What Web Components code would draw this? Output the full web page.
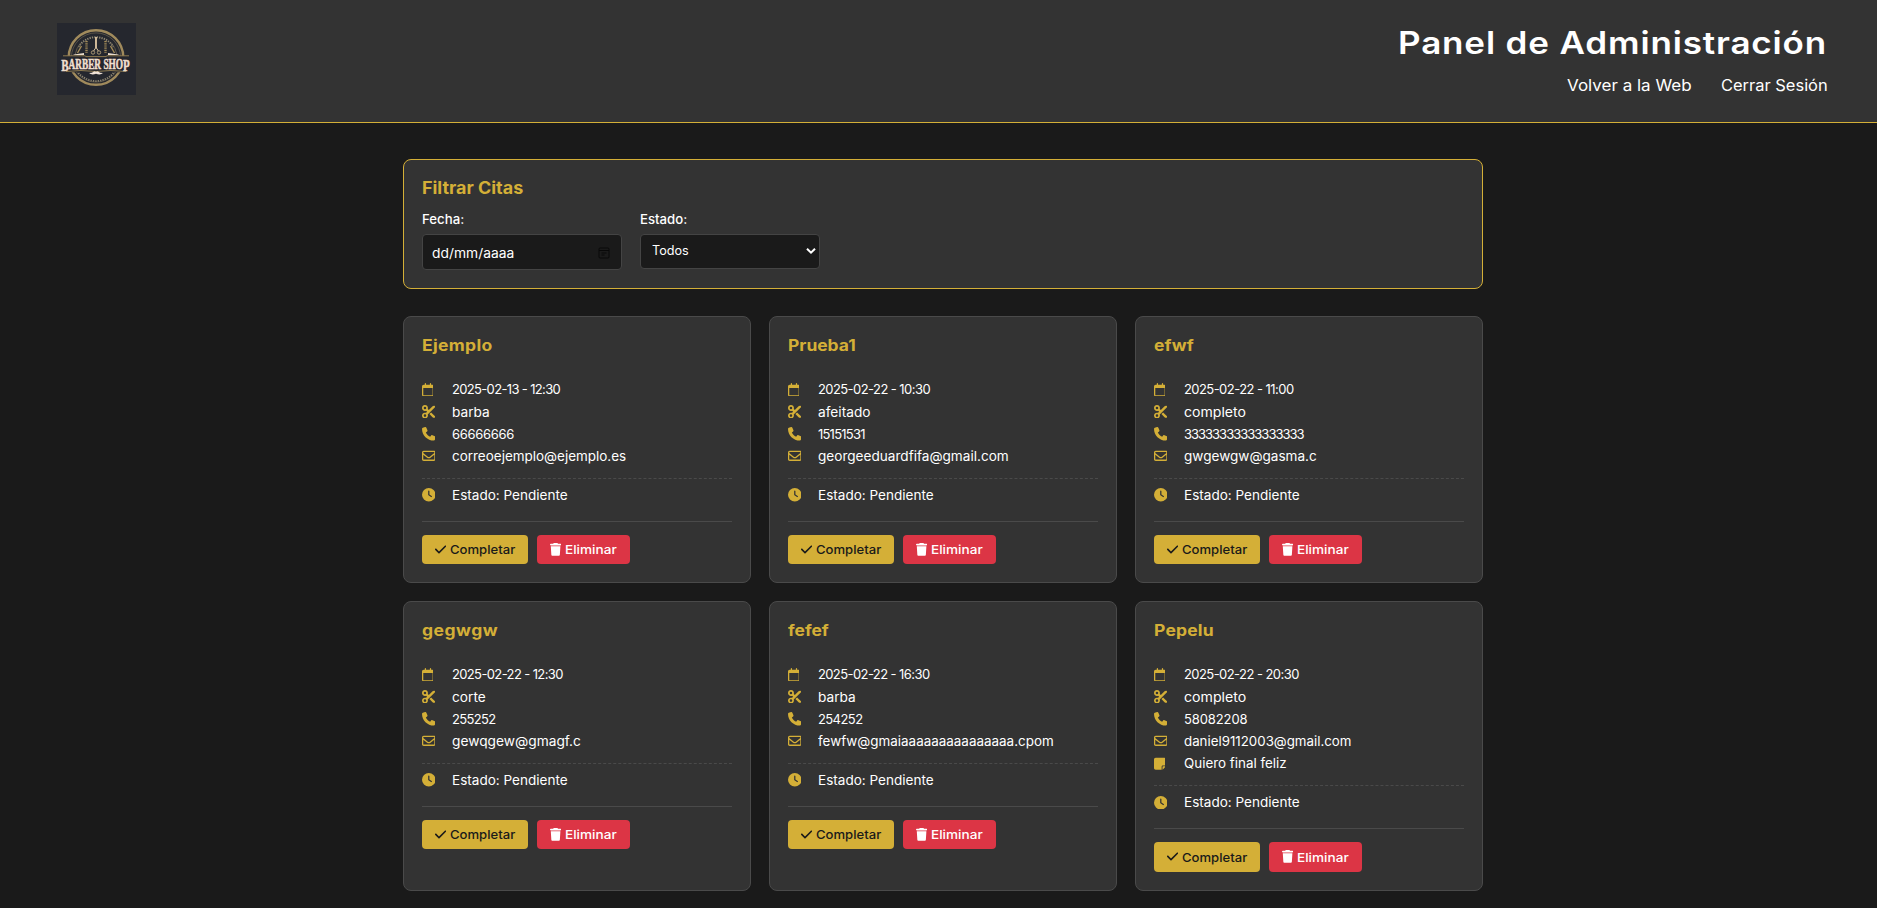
<!DOCTYPE html>
<html lang="es">
<head>
<meta charset="utf-8">
<title>Panel de Administración</title>
<style>
html,body{margin:0;height:100%;overflow:hidden}
body{background:#1a1a1a;color:#fff;font-family:Inter,"Open Sans",sans-serif;font-size:13px}
</style>
</head>
<body>
<admin-page></admin-page>
<script>
const ICONS = {
  calendar:[448,"M152 24c0-13.3-10.7-24-24-24s-24 10.7-24 24V64H64C28.7 64 0 92.7 0 128v16 48V448c0 35.3 28.7 64 64 64H384c35.3 0 64-28.7 64-64V192 144 128c0-35.3-28.7-64-64-64H344V24c0-13.3-10.7-24-24-24s-24 10.7-24 24V64H152V24zM48 192H400V448c0 8.8-7.2 16-16 16H64c-8.8 0-16-7.2-16-16V192z"],
  scissors:[512,"M256 192l-39.5-39.5c4.9-12.6 7.5-26.2 7.5-40.5C224 50.1 173.9 0 112 0S0 50.1 0 112s50.1 112 112 112c14.3 0 27.9-2.7 40.5-7.5L192 256l-39.5 39.5c-12.6-4.9-26.2-7.5-40.5-7.5C50.1 288 0 338.1 0 400s50.1 112 112 112s112-50.1 112-112c0-14.3-2.7-27.9-7.5-40.5L499.2 76.8c7.1-7.1 7.1-18.5 0-25.6c-28.3-28.3-74.1-28.3-102.4 0L256 192zm22.6 150.6L396.8 460.8c28.3 28.3 74.1 28.3 102.4 0c7.1-7.1 7.1-18.5 0-25.6L342.6 278.6l-64 64zM64 112a48 48 0 1 1 96 0 48 48 0 1 1 -96 0zm48 240a48 48 0 1 1 0 96 48 48 0 1 1 0-96z"],
  phone:[512,"M164.9 24.6c-7.7-18.6-28-28.5-47.4-23.2l-88 24C12.1 30.2 0 46 0 64C0 311.4 200.6 512 448 512c18 0 33.8-12.1 38.6-29.5l24-88c5.3-19.4-4.6-39.7-23.2-47.4l-96-40c-16.3-6.8-35.2-2.1-46.3 11.6L304.7 368C234.3 334.7 177.3 277.7 144 207.3L193.3 167c13.7-11.2 18.4-30 11.6-46.3l-40-96z"],
  envelope:[512,"M64 112c-8.8 0-16 7.2-16 16v22.1L220.5 291.7c20.7 17 50.4 17 71.1 0L464 150.1V128c0-8.8-7.2-16-16-16H64zM48 212.2V384c0 8.8 7.2 16 16 16H448c8.8 0 16-7.2 16-16V212.2L322 328.8c-38.4 31.5-93.7 31.5-132 0L48 212.2zM0 128C0 92.7 28.7 64 64 64H448c35.3 0 64 28.7 64 64V384c0 35.3-28.7 64-64 64H64c-35.3 0-64-28.7-64-64V128z"],
  clock:[512,"M256 0a256 256 0 1 1 0 512A256 256 0 1 1 256 0zM232 120V256c0 8 4 15.5 10.7 20l96 64c11 7.4 25.9 4.4 33.3-6.7s4.4-25.9-6.7-33.3L280 243.2V120c0-13.3-10.7-24-24-24s-24 10.7-24 24z"],
  note:[448,"M64 32C28.7 32 0 60.7 0 96V416c0 35.3 28.7 64 64 64H288V368c0-26.5 21.5-48 48-48H448V96c0-35.3-28.7-64-64-64H64zM448 352H402.7 336c-8.8 0-16 7.2-16 16v66.7V480l32-32 64-64 32-32z"],
  check:[448,"M438.6 105.4c12.5 12.5 12.5 32.8 0 45.3l-256 256c-12.5 12.5-32.8 12.5-45.3 0l-128-128c-12.5-12.5-12.5-32.8 0-45.3s32.8-12.5 45.3 0L160 338.7 393.4 105.4c12.5-12.5 32.8-12.5 45.3 0z"],
  trash:[448,"M135.2 17.7L128 32H32C14.3 32 0 46.3 0 64S14.3 96 32 96H416c17.7 0 32-14.3 32-32s-14.3-32-32-32H320l-7.2-14.3C307.4 6.8 296.3 0 284.2 0H163.8c-12.1 0-23.2 6.8-28.6 17.7zM416 128H32L53.2 467c1.6 25.3 22.6 45 47.9 45H346.9c25.3 0 46.3-19.7 47.9-45L416 128z"]
};

class BaseElement extends HTMLElement {
  connectedCallback(){
    if(this.shadowRoot) return;
    this.attachShadow({mode:"open"}).innerHTML = this.render();
    this.ready();
  }
  ready(){}
}

/* A line of text that is widened (glyphs first, then tracking) to fill the given width. */
customElements.define("fit-text", class extends BaseElement {
  render(){ return `<style>:host{display:inline-block;white-space:nowrap}span{display:inline-block;transform-origin:0 50%;margin-left:-.5px}</style><span><slot></slot></span>`; }
  ready(){
    const span = this.shadowRoot.querySelector("span");
    const target = parseFloat(this.getAttribute("w"));
    const n = this.textContent.length;
    const side = 1.2;
    const natural = span.getBoundingClientRect().width;
    const scale = Math.min(1.13, Math.max(1, (target + side) / natural));
    this.style.width = target + "px";
    span.style.letterSpacing = (((target + side) / scale - natural) / (n - 1)) + "px";
    if(scale > 1.005) span.style.transform = `scaleX(${scale})`;
  }
});

customElements.define("fa-icon", class extends BaseElement {
  render(){
    const [w,d] = ICONS[this.getAttribute("name")];
    const s = parseFloat(this.getAttribute("size") || 13.6);
    return `<style>:host{display:inline-flex;flex:none}svg{display:block;fill:currentColor}</style>
    <svg width="${s*w/512}" height="${s}" viewBox="0 0 ${w} 512"><path d="${d}"/></svg>`;
  }
});

customElements.define("shop-logo", class extends BaseElement {
  render(){ return `<style>:host{display:block;width:79px;height:72px}svg{display:block}</style>
  <svg width="79" height="72" viewBox="0 0 79 72">
    <rect width="79" height="72" fill="#25272e"/>
    <g fill="none">
      <circle cx="39" cy="34.500" r="27.300" stroke="#a08a5c" stroke-width="2.400"/>
      <circle cx="39" cy="34.500" r="24.600" stroke="#6c6352" stroke-width=".7"/>
      <path d="M21.500 24a20.500 20.500 0 0 1 35 0" stroke="#8d8571" stroke-width="2" stroke-dasharray="1.300 1.100"/>
      <path d="M20 48a23 23 0 0 0 38 0" stroke="#8d8571" stroke-width="1.800" stroke-dasharray="1.300 1.100"/>
      <path d="M18 32a22 22 0 0 1 6-12M60 32a22 22 0 0 0-6-12" stroke="#6f6653" stroke-width=".8"/>
      <path d="M38.600 14v11l-2 3M39.400 14v11l2 3" stroke="#e0c8a4" stroke-width="1"/>
      <circle cx="36" cy="29.500" r="1.700" stroke="#b5a07a" stroke-width=".9"/>
      <circle cx="42" cy="29.500" r="1.700" stroke="#b5a07a" stroke-width=".9"/>
      <path d="M29.500 18v12M48.500 18v12" stroke="#a38b58" stroke-width="2.400" stroke-dasharray="1 .8"/>
      <path d="M24.500 23l-4 7M53.500 23l4 7" stroke="#a38b58" stroke-width="1.400"/>
    </g>
    <path d="M17 31.500l10-1.500v2H16zM61 31.500l-10-1.500v2h11z" fill="#eadccb"/>
    <path d="M7 32.800h64l-2 4v8l3 4.500H6l3-4.500v-8z" fill="#25272e"/>
    <path d="M6 32.800h22l1 .8h20l1-.8h22M9 48.500q15-2 30 0q15-2 30 0" fill="none" stroke="#9a8353" stroke-width=".9"/>
    <text transform="translate(4.200 46.300) scale(.665 1)" fill="#f0dfcf" stroke="#f0dfcf" stroke-width=".5" font-family="Liberation Serif, serif" font-weight="700" font-size="14"><tspan font-size="16.500" dy="1.800">B</tspan><tspan dy="-1.800">ARBER SHO</tspan><tspan font-size="16.500" dy="1.800">P</tspan></text>
    <path d="M32 50q3.500 0 4.800-1.500q1.400-.8 2.200.4q.8-1.200 2.200-.4q1.300 1.500 4.800 1.500q-2.500 2.500-7 .8q-4.500 1.700-7-.8z" fill="#f0e3d8"/>
  </svg>`; }
});

customElements.define("admin-header", class extends BaseElement {
  render(){ return `<style>
    :host{display:flex;box-sizing:border-box;height:123px;padding:23px 50px 0 57px;justify-content:space-between;align-items:flex-start;background:#333;border-bottom:1px solid #d4af37}
    .right{display:flex;flex-direction:column;align-items:flex-end;gap:13px}
    h1{margin:0;font-size:31px;line-height:39px;font-weight:600;margin-right:1.500px}
    nav{display:flex;gap:31px;font-size:15.5px;line-height:22px}
    a{color:#fff;text-decoration:none}
    </style>
    <shop-logo></shop-logo>
    <div class="right"><h1><fit-text w="427">Panel de Administración</fit-text></h1>
    <nav><a><fit-text w="123.5">Volver a la Web</fit-text></a><a><fit-text w="105.5">Cerrar Sesión</fit-text></a></nav></div>`; }
});

customElements.define("filter-panel", class extends BaseElement {
  render(){ return `<style>
    :host{display:block;box-sizing:border-box;height:130px;padding:17px 18px;background:#333;border:1px solid #d4af37;border-radius:8px}
    h2{margin:0 0 12px;font-size:17px;line-height:22px;font-weight:700;color:#d4af37}
    .row{display:flex;gap:18px;align-items:flex-start}
    label{display:block;font-size:13px;line-height:16px;font-weight:500;margin-bottom:7px}
    .box{box-sizing:border-box;display:flex;align-items:center;justify-content:space-between;background:#1a1a1a;border:1px solid #444;border-radius:4px;line-height:16px}
    .date{width:200px;height:36px;padding:1px 11px 0 9.500px}
    .select{width:180px;height:35px;padding:0 3px 1px 11.500px;font-size:12.500px}
    svg{display:block}
    </style>
    <h2><fit-text w="100">Filtrar Citas</fit-text></h2>
    <div class="row">
      <div><label><fit-text w="41">Fecha:</fit-text></label>
        <div class="box date"><fit-text w="81">dd/mm/aaaa</fit-text>
        <svg width="12" height="12" viewBox="0 0 12 12" fill="none" stroke="#080808"><rect x="1" y="1" width="10" height="10" rx="1"/><path d="M1 3.500h10M3.500 6h5M3.500 8h3"/></svg></div></div>
      <div><label><fit-text w="46">Estado:</fit-text></label>
        <div class="box select"><fit-text w="35.5">Todos</fit-text>
        <svg width="10" height="8" viewBox="0 0 10 8" fill="none" stroke="#fff" stroke-width="2"><path d="M1 1.700l4 4 4-4"/></svg></div></div>
    </div>`; }
});

customElements.define("action-button", class extends BaseElement {
  render(){ return `<style>
    :host{display:flex;box-sizing:border-box;height:29.300px;padding:0 0 0 13px;gap:4.300px;align-items:center;border-radius:4px;font-size:12.300px;line-height:16px;font-weight:450;background:#d4af37;color:#1a1a1a;width:106px}
    :host([kind=danger]){background:#dc3545;color:#fff;width:93px;font-weight:500}
    ::slotted(fit-text){margin-top:1.400px}
    </style><fa-icon name="${this.getAttribute("icon")}" size="12.8"></fa-icon><slot></slot>`; }
});

customElements.define("info-row", class extends BaseElement {
  render(){ return `<style>
    :host{display:grid;grid-template-columns:30.900px 1fr;align-items:center;height:22.250px;line-height:22px;margin-left:-.5px}
    fa-icon{color:#d4af37}
    </style><fa-icon name="${this.getAttribute("icon")}"></fa-icon><slot></slot>`; }
});

customElements.define("cita-card", class extends BaseElement {
  render(){
    const c = this.data, icons = ["calendar","scissors","phone","envelope","note"];
    return `<style>
    :host{display:block;box-sizing:border-box;padding:18px;background:#333;border:1px solid #4a4a4a;border-radius:8px}
    h3{margin:0 0 22.300px;font-size:15.500px;line-height:21px;font-weight:700;color:#d4af37}
    .state{margin-top:10.700px;padding-top:5px;border-top:1px dashed #4a4a4a}
    .actions{display:flex;gap:9px;margin-top:14.750px;padding-top:13px;border-top:1px solid #4a4a4a}
    </style>
    <h3><fit-text w="${c.name[1]}">${c.name[0]}</fit-text></h3>
    ${c.rows.map((r,i)=>`<info-row icon="${icons[i]}"><fit-text w="${r[1]}">${r[0]}</fit-text></info-row>`).join("")}
    <div class="state"><info-row icon="clock"><fit-text w="114.5">Estado: Pendiente</fit-text></info-row></div>
    <div class="actions"><action-button icon="check"><fit-text w="64">Completar</fit-text></action-button><action-button kind="danger" icon="trash"><fit-text w="50.5">Eliminar</fit-text></action-button></div>`;
  }
});

const CITAS = [
  {name:["Ejemplo",69], rows:[["2025-02-13 - 12:30",107.7],["barba",36.5],["66666666",61.3],["correoejemplo@ejemplo.es",173]]},
  {name:["Prueba1",66.5], rows:[["2025-02-22 - 10:30",111.5],["afeitado",51.3],["15151531",46.5],["georgeeduardfifa@gmail.com",189.5]]},
  {name:["efwf",38.5], rows:[["2025-02-22 - 11:00",109],["completo",60.7],["33333333333333333",119.5],["gwgewgw@gasma.c",131.5]]},
  {name:["gegwgw",74.5], rows:[["2025-02-22 - 12:30",110.3],["corte",32.5],["255252",43],["gewqgew@gmagf.c",127.7]]},
  {name:["fefef",39.5], rows:[["2025-02-22 - 16:30",111],["barba",36.5],["254252",44],["fewfw@gmaiaaaaaaaaaaaaaaa.cpom",234.5]]},
  {name:["Pepelu",58.5], rows:[["2025-02-22 - 20:30",114.3],["completo",61],["58082208",62.5],["daniel9112003@gmail.com",166.3],["Quiero final feliz",101.5]]}
];

customElements.define("citas-grid", class extends BaseElement {
  render(){ return `<style>:host{display:grid;grid-template-columns:repeat(3,1fr);grid-template-rows:267px 290px;gap:18px}</style>`; }
  ready(){
    for(const c of CITAS){
      const el = document.createElement("cita-card");
      el.data = c;
      this.shadowRoot.append(el);
    }
  }
});

customElements.define("admin-page", class extends BaseElement {
  render(){ return `<style>:host{display:block}
    main{width:1080px;margin:36px 0 0 403px;display:flex;flex-direction:column;gap:27px}</style>
    <admin-header></admin-header>
    <main><filter-panel></filter-panel><citas-grid></citas-grid></main>`; }
});
</script>
</body>
</html>
